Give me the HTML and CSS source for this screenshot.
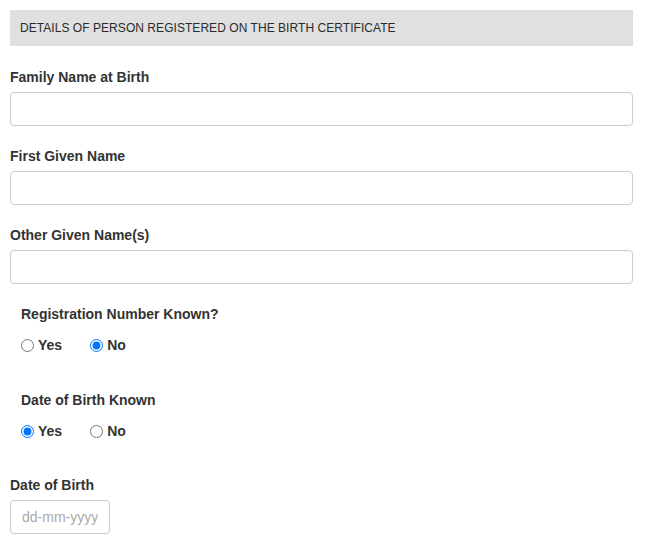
FILE: index.html
```html
<!DOCTYPE html>
<html>
<head>
<meta charset="utf-8">
<link rel="stylesheet" href="styles.css">
</head>
<body>
<div class="form">
  <div class="section-head">DETAILS OF PERSON REGISTERED ON THE BIRTH CERTIFICATE</div>

  <div class="field">
    <label class="lbl">Family Name at Birth</label>
    <input class="txt" type="text">
  </div>
  <div class="field">
    <label class="lbl">First Given Name</label>
    <input class="txt" type="text">
  </div>
  <div class="field">
    <label class="lbl">Other Given Name(s)</label>
    <input class="txt" type="text">
  </div>

  <div class="radio-group">
    <div class="lbl">Registration Number Known?</div>
    <div class="radios">
      <label class="opt"><input type="radio" name="reg"><span>Yes</span></label>
      <label class="opt"><input type="radio" name="reg" checked><span>No</span></label>
    </div>
  </div>

  <div class="radio-group second">
    <div class="lbl">Date of Birth Known</div>
    <div class="radios">
      <label class="opt"><input type="radio" name="dob" checked><span>Yes</span></label>
      <label class="opt"><input type="radio" name="dob"><span>No</span></label>
    </div>
  </div>

  <div class="field dob">
    <label class="lbl">Date of Birth</label>
    <input class="txt date" type="text" placeholder="dd-mm-yyyy">
  </div>
</div>
</body>
</html>
```
FILE: styles.css
```css
* { box-sizing: border-box; }
body {
  margin: 0;
  background: #fff;
  font-family: "Liberation Sans", Arial, sans-serif;
  color: #333;
}
.form {
  padding: 10px 20px 0 10px;
  width: 653px;
}
.section-head {
  background: #e0e0e0;
  height: 36px;
  padding-left: 10px;
  display: flex;
  align-items: center;
  font-size: 12px;
  letter-spacing: 0.05px;
  color: #2b2b2b;
}
.field {
  display: flex;
  flex-direction: column;
  gap: 5px;
  margin-top: 20px;
}
.section-head + .field { margin-top: 21px; }
.lbl {
  font-size: 14px;
  line-height: 20px;
  font-weight: bold;
  color: #333;
}
.txt {
  height: 34px;
  width: 100%;
  border: 1px solid #ccc;
  border-radius: 4px;
  font-family: inherit;
  font-size: 14px;
  padding: 6px 12px;
  outline: none;
}
.date {
  width: 100px;
  padding: 6px 11px;
}
.date::placeholder { color: #aaa; }
.radio-group {
  margin-top: 20px;
  padding-left: 11px;
}
.radio-group.second { margin-top: 35px; }
.radios {
  display: flex;
  margin-top: 11px;
  height: 20px;
  align-items: center;
}
.opt {
  display: flex;
  align-items: center;
  gap: 4px;
  font-size: 14px;
  font-weight: bold;
  color: #333;
  margin-right: 28px;
}
.opt input {
  margin: 0;
  width: 13px;
  height: 13px;
}
.field.dob { margin-top: 34px; }
```
